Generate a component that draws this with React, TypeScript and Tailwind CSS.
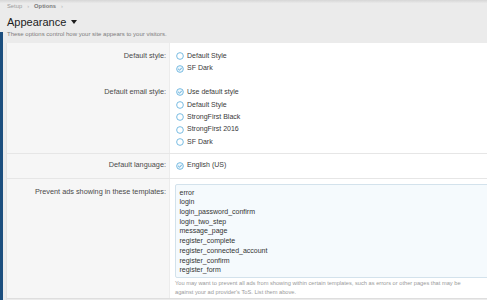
import React from "react";

function Radio({ checked }: { checked?: boolean }) {
  return (
    <svg width="8" height="8" viewBox="0 0 8 8" className="shrink-0">
      <circle cx="4" cy="4" r="3.35" fill={checked ? "#eef7fc" : "#ffffff"} stroke="#6ab4df" strokeWidth="0.9" />
      {checked && (
        <path d="M2.4 4.1 L3.55 5.2 L5.6 3" fill="none" stroke="#4d9fd2" strokeWidth="0.9" strokeLinecap="round" strokeLinejoin="round" />
      )}
    </svg>
  );
}

function Option({ label, checked }: { label: string; checked?: boolean }) {
  return (
    <div className="flex items-center h-[12.4px] gap-[3.5px] text-[7px] text-[#3a3a3a] whitespace-nowrap">
      <Radio checked={checked} />
      <span>{label}</span>
    </div>
  );
}

function Label({ children, pt }: { children: React.ReactNode; pt: string }) {
  return (
    <div className={`w-[162px] shrink-0 bg-[#f6f6f6] flex justify-end pr-[3px] ${pt}`}>
      <div className="h-[12.4px] flex items-center text-[7.3px] text-[#4a4a4a] whitespace-nowrap">{children}</div>
    </div>
  );
}

const templates = [
  "error",
  "login",
  "login_password_confirm",
  "login_two_step",
  "message_page",
  "register_complete",
  "register_connected_account",
  "register_confirm",
  "register_form",
];

export default function App() {
  return (
    <div className="w-[487px] h-[300px] overflow-hidden bg-[#ebebeb] flex font-['Liberation_Sans',Arial,sans-serif]">
      <div className="w-[3px] shrink-0 flex flex-col">
        <div className="mt-[32px] flex-1 bg-[#1b4e7e]" />
      </div>
      <div className="flex-1 flex flex-col min-w-0">
        <div className="h-[3px] bg-gradient-to-b from-[#d6d6d6] to-[#e9e9e9] -ml-[3px]" />
        <div className="flex flex-col pl-[4px]">
          <div className="h-[7px] flex items-center gap-[5px] text-[5.8px] text-[#9a9a9a] whitespace-nowrap">
            <span>Setup</span>
            <span className="text-[#b5b5b5]">›</span>
            <span className="font-bold text-[#7a7a7a]">Options</span>
            <span className="text-[#b5b5b5]">›</span>
          </div>
          <div className="mt-[5px] h-[14px] flex items-center gap-[5px]">
            <span className="text-[11px] text-[#1c1c1c] leading-[14px]">Appearance</span>
            <svg width="6" height="4" viewBox="0 0 6 4">
              <path d="M0 0 L6 0 L3 4 Z" fill="#1c1c1c" />
            </svg>
          </div>
          <div className="mt-[2px] h-[7px] flex items-center text-[6px] text-[#7d7d7d] whitespace-nowrap">
            These options control how your site appears to your visitors.
          </div>
        </div>
        <div className="mt-[5px] ml-[3px] flex-1 flex flex-col bg-white border-l border-[#e2e2e2]">
          {/* Default style */}
          <div className="flex">
            <Label pt="pt-[7px]">Default style:</Label>
            <div className="flex-1 flex flex-col pl-[5.5px] pt-[7px] pb-[5.5px] border-l border-[#ececec]">
              <Option label="Default Style" />
              <Option label="SF Dark" checked />
            </div>
          </div>
          {/* Default email style */}
          <div className="flex border-b border-[#e6e6e6]">
            <Label pt="pt-[6px]">Default email style:</Label>
            <div className="flex-1 flex flex-col pl-[5.5px] pt-[6px] pb-[4.6px] border-l border-[#ececec]">
              <Option label="Use default style" checked />
              <Option label="Default Style" />
              <Option label="StrongFirst Black" />
              <Option label="StrongFirst 2016" />
              <Option label="SF Dark" />
            </div>
          </div>
          {/* Default language */}
          <div className="flex border-b border-[#e6e6e6]">
            <Label pt="pt-[5.5px]">Default language:</Label>
            <div className="flex-1 flex flex-col pl-[5.5px] pt-[5.5px] pb-[6px] border-l border-[#ececec]">
              <Option label="English (US)" checked />
            </div>
          </div>
          {/* Prevent ads */}
          <div className="flex border-b border-[#dedede]">
            <Label pt="pt-[8px]">Prevent ads showing in these templates:</Label>
            <div className="flex-1 flex flex-col pl-[5px] pt-[5px] pb-[1px] border-l border-[#ececec] min-w-0">
              <div className="w-[330px] h-[94px] shrink-0 bg-[#f5fafd] border border-[#d3e2ec] rounded-[2px] pt-[3px] pl-[3.5px] flex flex-col">
                {templates.map((t) => (
                  <div key={t} className="h-[9.7px] leading-[9.7px] text-[7px] text-[#333] whitespace-nowrap">
                    {t}
                  </div>
                ))}
              </div>
              <div className="mt-[1px] text-[5.7px] leading-[9px] text-[#9a9a9a] whitespace-nowrap">
                You may want to prevent all ads from showing within certain templates, such as errors or other pages that may be
                <br />
                against your ad provider's ToS. List them above.
              </div>
            </div>
          </div>
          <div className="flex-1 bg-[#ebebeb]" />
        </div>
      </div>
    </div>
  );
}
